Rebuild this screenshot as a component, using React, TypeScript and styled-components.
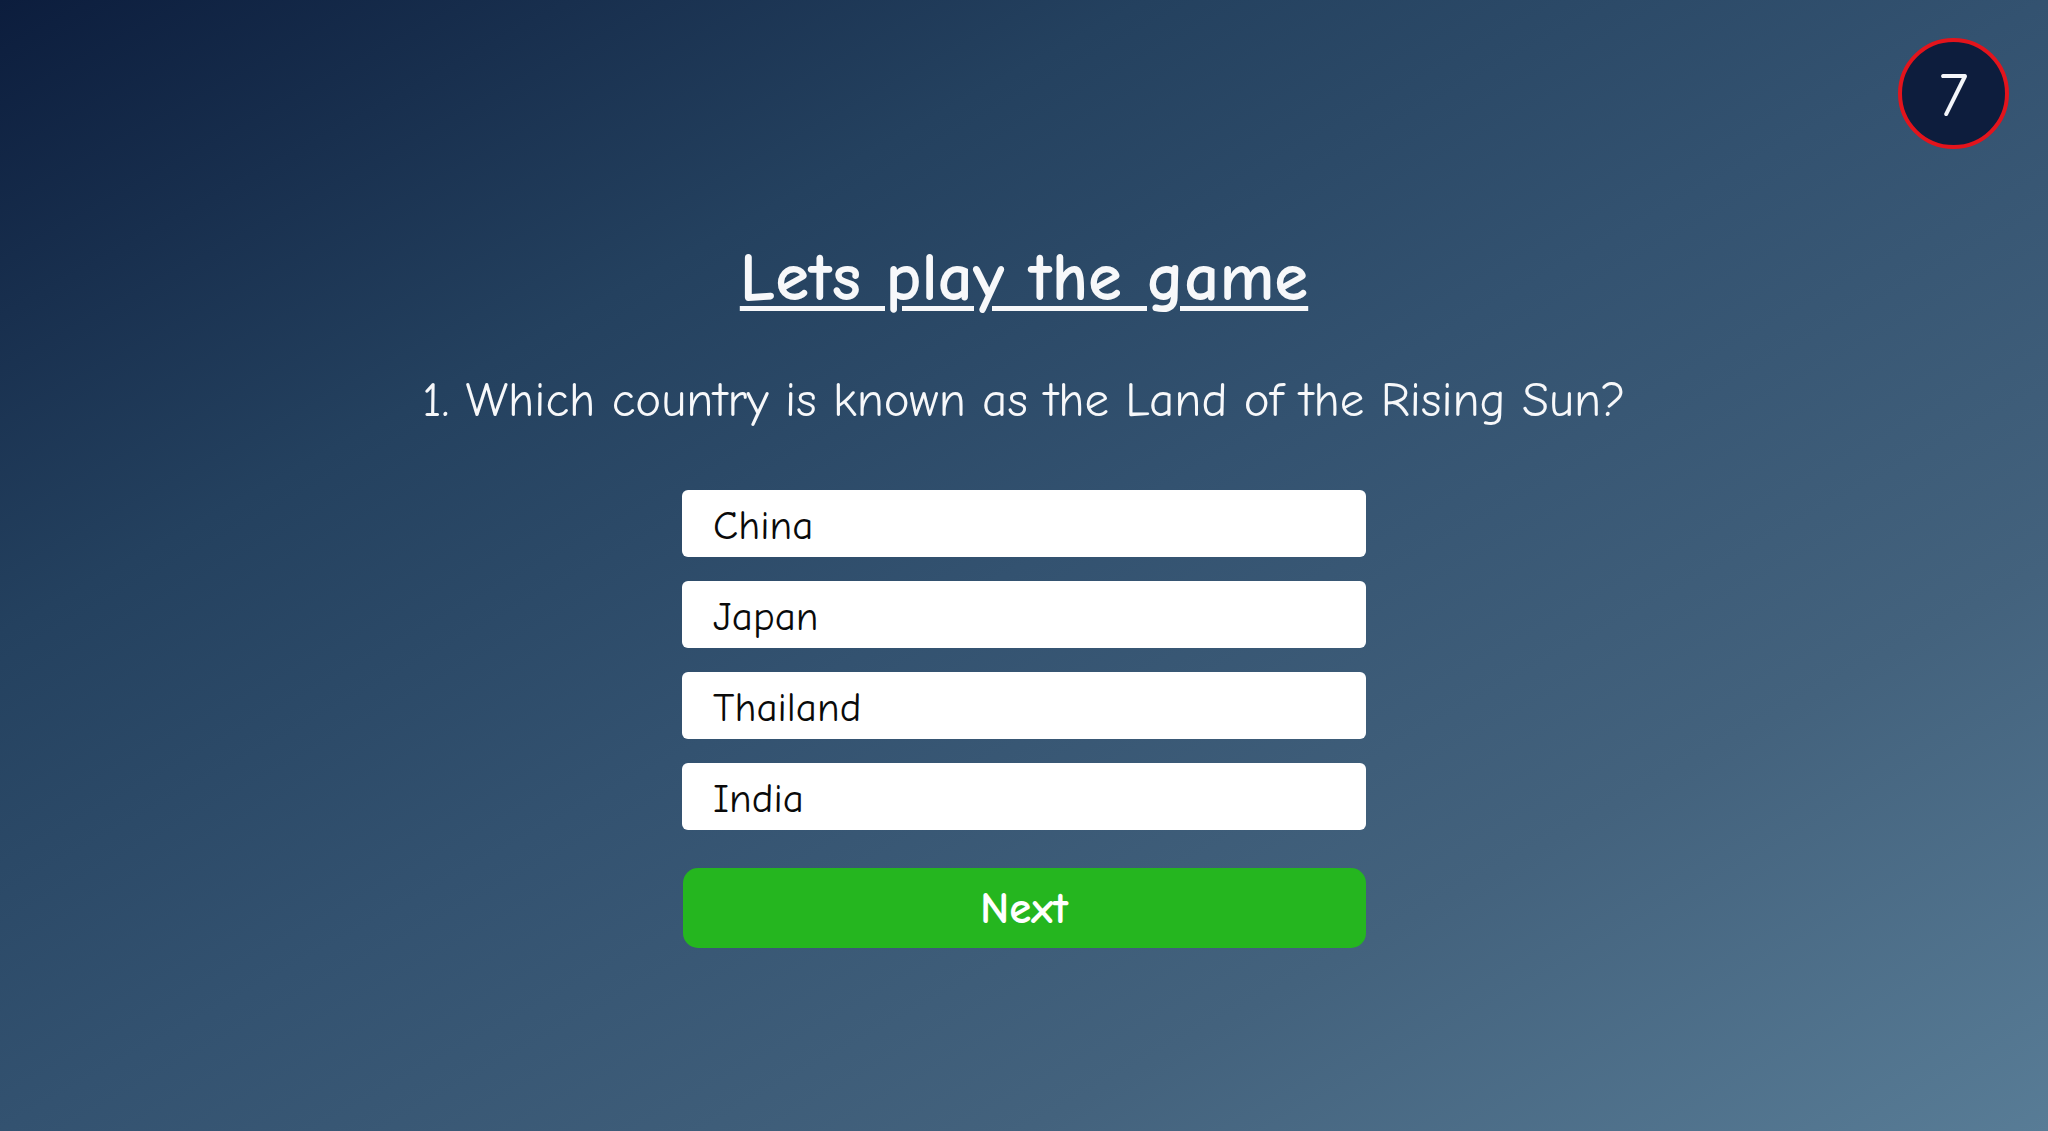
import React from "react";
import styled, { createGlobalStyle } from "styled-components";

const options = ["China", "Japan", "Thailand", "India"];

const GlobalStyle = createGlobalStyle`
  html, body {
    margin: 0;
    padding: 0;
  }
  body {
    font-family: "Comic Sans MS", "Comic Neue", "DejaVu Sans", sans-serif;
  }
`;

const App = () => {
  return (
    <Page>
      <GlobalStyle />
      <Timer>7</Timer>
      <Content>
        <Title>Lets play the game</Title>
        <Question>1. Which country is known as the Land of the Rising Sun?</Question>
        <OptionList>
          {options.map((option) => (
            <Option key={option}>{option}</Option>
          ))}
        </OptionList>
        <NextButton>Next</NextButton>
      </Content>
    </Page>
  );
};

const Page = styled.div`
  position: relative;
  min-height: 100vh;
  box-sizing: border-box;
  background: linear-gradient(to bottom right, #0c1d3d 0%, #24415f 28%, #335270 50%, #43627d 75%, #587c96 100%);
  color: #ffffff;
`;

const Timer = styled.div`
  position: absolute;
  top: 38px;
  right: 39px;
  width: 111px;
  height: 111px;
  box-sizing: border-box;
  border-radius: 50%;
  border: 4px solid #e3141c;
  background-color: #0d1d3d;
  display: flex;
  align-items: center;
  justify-content: center;
  padding-top: 4px;
  font-size: 62px;
  font-weight: 400;
  color: #f4f6fa;
`;

const Content = styled.div`
  display: flex;
  flex-direction: column;
  align-items: center;
  padding-top: 236px;
`;

const Title = styled.h1`
  margin: 0;
  font-size: 69px;
  line-height: 84px;
  font-weight: 700;
  text-decoration: underline;
  text-decoration-thickness: 5px;
  text-underline-offset: 6px;
  color: #f7f8fa;
`;

const Question = styled.p`
  margin: 52px 0 0 0;
  font-size: 49px;
  line-height: 56px;
  font-weight: 400;
  color: #f7f8fa;
`;

const OptionList = styled.div`
  display: flex;
  flex-direction: column;
  gap: 24px;
  margin-top: 62px;
  width: 684px;
`;

const Option = styled.div`
  height: 67px;
  box-sizing: border-box;
  display: flex;
  align-items: center;
  padding: 4px 0 0 31px;
  background-color: #ffffff;
  border-radius: 6px;
  color: #0a0a0a;
  font-size: 41px;
  cursor: pointer;
`;

const NextButton = styled.button`
  margin-top: 38px;
  width: 683px;
  height: 80px;
  border: none;
  border-radius: 15px;
  background-color: #25b61f;
  color: #ffffff;
  font-family: inherit;
  font-size: 45px;
  font-weight: 700;
  cursor: pointer;
`;

export default App;
